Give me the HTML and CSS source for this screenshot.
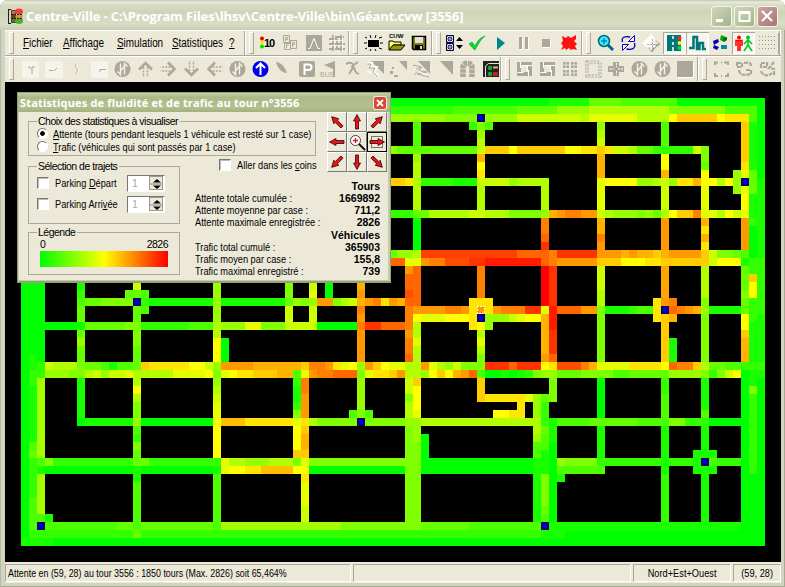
FILE: index.html
```html
<!DOCTYPE html>
<html lang="fr">
<head>
<meta charset="utf-8">
<title>Centre-Ville</title>
<link rel="stylesheet" href="styles.css">
</head>
<body>
<div class="window">
  <header class="titlebar">
    <svg class="logo" width="17" height="17" viewBox="0 0 17 17"><path d="M1.500 1v15M1 1.500h3M1 15.500h3" stroke="#222" fill="none"/><path d="M4 2h5v13H4z" fill="#6b3a28"/><path d="M5 3h3v3H5z" fill="#c0705a"/><path d="M5 11h3v3H5z" fill="#2f8a2a"/><ellipse cx="12" cy="3.500" rx="4" ry="3" fill="#ee4238"/><ellipse cx="12" cy="8.500" rx="3.500" ry="2.200" fill="#c69a3a"/><ellipse cx="12" cy="13" rx="4" ry="3" fill="#4fae25"/><path d="M4 6.500h12M4 10.500h12" stroke="#312" stroke-dasharray="2 1"/></svg>
    <h1 class="caption">Centre-Ville - C:\Program Files\lhsv\Centre-Ville\bin\Géant.cvw [3556]</h1>
    <div class="controls">
      <span class="ctl"><svg width="21" height="21"><path d="M5 14.500h7" stroke="#fff" stroke-width="3"/></svg></span>
      <span class="ctl"><svg width="21" height="21"><path d="M5.500 6h10v9h-10zM5 7h11" stroke="#fff" stroke-width="2" fill="none"/></svg></span>
      <span class="ctl close"><svg width="21" height="21"><path d="M5 5l10 10M15 5L5 15" stroke="#fff" stroke-width="2.200"/></svg></span>
    </div>
  </header>

  <div class="bar">
    <nav class="band menu"><span><u>F</u>ichier</span><span><u>A</u>ffichage</span><span><u>S</u>imulation</span><span><u>S</u>tatistiques</span><span><u>?</u></span></nav>
    <div class="band b2">
      <svg class="i"><circle cx="6" cy="6.500" r="2" fill="#e00"/><circle cx="6" cy="10.500" r="2" fill="#ee0"/><circle cx="6" cy="14.500" r="2" fill="#0d0"/><text class="ten" x="8" y="15">10</text></svg>
      <svg class="i"><path d="M4.500 3.500h6v7h-6zM5.500 11.500h6v6h-6zM11.500 8.500h6v8h-6z" fill="none" stroke="#aca899"/><path d="M6.500 9V5.500h2v2h-2M13.500 15v-4.500h2v2h-2M7.500 16v-3h2" fill="none" stroke="#aca899"/></svg>
      <svg class="i gray"><path d="M4 3h16v16H4z"/><path d="M6 16.500h2L10.500 10 12 6.500 13.500 10l2.500 6.500h2" fill="none" stroke="#fff"/></svg>
      <svg class="i"><path d="M8 3v16M16 3v16M4 7h8M10 5h9M4 12h16M4 17h16M12 7v10" stroke="#aca899" stroke-width="1.800"/><path d="M9.500 4v14M17.500 4v14M5 8.500h14M5 13.500h14" stroke="#fff" stroke-width=".7"/></svg>
    </div>
    <div class="band b3">
      <svg class="i"><path d="M6 8h11v7H6z"/><path d="M8 3l1 3M14 3l-1 3M3 5l2 1M20 5l-3 1M2 11h3M18 11h3M3 17l2-1M20 17l-3-1M8 19l1-2M14 19l-1-2" stroke="#000"/></svg>
      <svg class="i"><text class="cuw" x="4" y="6">CUW</text><path d="M4 18V9h4l1 1h7v3H9z" fill="#ff6" stroke="#000"/><path d="M4 18l4-5h12l-4 5z" fill="#990" stroke="#000"/></svg>
      <svg class="i"><path d="M4.500 4.500h13v13h-12l-1-1z" fill="#7d7b18" stroke="#000" stroke-width="1.500"/><path d="M7 5h8v6H7z" fill="#e4e2d6"/><path d="M7 13h8v5H7z"/><path d="M12 14h2v3h-2z" fill="#ddd"/></svg>
    </div>
    <div class="band b4">
      <svg class="i"><path d="M3.500 3.500h7v7h-7zM3.500 11.500h7v7h-7z" fill="#f4f4ff" stroke="#003"/><path d="M4 4l6 6M10 4l-6 6M4 12l6 6M10 12l-6 6" stroke="#99b"/><circle cx="7" cy="7" r="2" fill="none" stroke="#006"/><circle cx="7" cy="15" r="2" fill="none" stroke="#006"/><path d="M13 9l3.500-4L20 9zM13 13l3.500 4 3.500-4z"/></svg>
      <svg class="i"><path d="M3 12l3-2 3 4c3-6 5-8 10-10-4 3-6 7-10 14-1 0-4-4-6-6z" fill="#0d2" stroke="#083" stroke-width=".5"/></svg>
      <svg class="i"><path d="M8 5l8 6-8 7z" fill="#088"/></svg>
      <svg class="i gray"><path d="M7 5h3v12H7zM13 5h3v12h-3z"/><path d="M10.500 6v11.500H8M16.500 6v11.500H14" stroke="#fff" fill="none"/></svg>
      <svg class="i gray"><path d="M7 7h8v8H7z"/><path d="M15.500 8v7.500H8" stroke="#fff" fill="none"/></svg>
      <svg class="i"><path d="M4 4l4 2 2-2 3 2 5-3v4l-2 2 3 3-2 2 2 4-4-1-2 1-2-2-3 2-1-2-4 2 2-4-2-3 2-2z" fill="#f11"/></svg>
    </div>
    <div class="band b5">
      <svg class="i"><circle cx="10" cy="9" r="5.500" fill="#3ef" stroke="#067" stroke-width="1.500"/><path d="M10 6v6M7 9h6" stroke="#05a"/><path d="M14 13l5 5" stroke="#068" stroke-width="3"/></svg>
      <svg class="i"><path d="M5.500 10C4 5 8 4 13 5M17.500 11c1.500 6-3 7-8 6" fill="none" stroke="#00c" stroke-width="1.300"/><path d="M17.500 3.500v6h-6zM5.500 18.500v-6h6z" fill="#fff" stroke="#00c"/></svg>
      <svg class="i"><path d="M20 12l-4-3v6zM12 20l-3-4h6zM18 13l-5 5" fill="#aca899" stroke="#aca899"/><path d="M11 4v14M4 11h14M11 3l3 4H8zM3 11l4-3v6zM8 8v6h6V8z" stroke="#fff" stroke-width="1.500" fill="none"/><path d="M12.500 7v10M7 12.500h10" stroke="#aca899" stroke-dasharray="2 1"/></svg>
      <svg class="i on"><path d="M4 3h5v3h1V3h3v16h-3v-3H9v3H4z" fill="#077"/><path d="M9 3h9v16H9z" fill="#077"/><path d="M10 4v3M10 10v3M10 15v4" stroke="#fff" stroke-width="1.500"/><circle cx="16.500" cy="6" r="2" fill="#f22"/><circle cx="16.500" cy="11" r="2" fill="#fe0"/><circle cx="16.500" cy="16" r="2" fill="#0d3"/></svg>
      <svg class="i on"><path d="M3 16h4.500V5H11v12h2.500v-6H17v6h3" fill="none" stroke="#077" stroke-width="2.500"/></svg>
      <svg class="i"><path d="M4 9l5-2 1 3-5 3zM5 13l5 2-2 3-4-2z" fill="#00b"/><path d="M12 3l5 2-2 5-4-2z" fill="#0a0"/><path d="M14 6l4-1v3l-3 2z" fill="#063"/><path d="M12 13h6v4h-6z" fill="#08a"/></svg>
      <svg class="i on"><circle cx="7" cy="5.500" r="2" fill="#f00"/><path d="M4 14V8.500h6V14M6 8v11M8 8v11" stroke="#f00" stroke-width="1.600" fill="none"/><circle cx="16" cy="5.500" r="2" fill="#0c2"/><path d="M16 7v6l-4 6M16 13l4 6M12 12l4-4 4 4" stroke="#0c2" stroke-width="1.600" fill="none"/></svg>
      <svg class="i"><path d="M4 4.500h16M4 8.500h16M4 12.500h16M4 16.500h16" stroke="#999585" stroke-dasharray="1 2"/></svg>
      <span class="sep"></span>
    </div>
  </div>

  <div class="bar second">
    <div class="band c1">
      <svg class="i"><path d="M3 3h17v17H3z" fill="#f5f3ea"/><path d="M9 9h2v2M16 9h-3v7" stroke="#aca899" fill="none"/></svg>
      <svg class="i"><path d="M3 3h18v17H3z" fill="#f5f3ea"/><path d="M7 12.500h4M12 13l3-3" stroke="#aca899" fill="none"/></svg>
      <svg class="i"><path d="M11 6v4l2 2-2 4" stroke="#aca899" fill="none"/><path d="M12 6v4l2 2-2 4" stroke="#fff" fill="none"/></svg>
      <svg class="i"><path d="M3 3h17v17H3z" fill="#f5f3ea"/><path d="M12 14v-2.500h6" stroke="#aca899" fill="none"/></svg>
      <svg class="i"><use href="#way"/></svg>
      <svg class="i"><use href="#up"/></svg>
      <svg class="i"><use href="#up" transform="rotate(90 11.500 11)"/></svg>
      <svg class="i"><use href="#up" transform="rotate(180 11.500 11)"/></svg>
      <svg class="i"><use href="#up" transform="rotate(270 11.500 11)"/></svg>
      <svg class="i"><use href="#way"/></svg>
      <svg class="i"><circle cx="11.500" cy="11" r="8" fill="#0000e8"/><path d="M11.500 17V6M7 10l4.500-4.500L16 10" stroke="#fff" stroke-width="2" fill="none"/></svg>
      <svg class="i gray"><path d="M4 4c5 0 9 5 11 11-5 0-9-4-11-11z"/></svg>
      <svg class="i gray"><rect x="4" y="3" width="16" height="16" rx="2"/><path d="M9.500 17V6.500h4c4 0 4 5.500 0 5.500h-4" stroke="#fff" stroke-width="2" fill="none"/></svg>
      <svg class="i gray"><path d="M17 3v16h-2v-8L6 7z"/><text class="bus" x="2" y="19">BUS</text></svg>
      <svg class="i"><path d="M5 6c5-3 8 0 7 3s-3 5-4 7M10 9l7-5M13 9c1 5 2 6 5 7" stroke="#aca899" stroke-width="2" fill="none"/></svg>
      <svg class="i gray"><path d="M7 3h13v13z"/><path d="M3 5h5L6 9h7l-3 5 5 5M4 13l3 2" stroke="#fff" fill="none" stroke-width="2"/><path d="M3 6h4L5 10h6l-2 4 5 5" stroke="#aca899" fill="none"/></svg>
      <svg class="i gray"><path d="M12 3h8v9z"/><path d="M3 13h3v3H3zM7 17h4v2H7zM5 9h2v2H5z"/></svg>
      <svg class="i gray"><path d="M8 3h12v13z"/><path d="M3 7l8 2-6 3 12 2-10 2 12 3M4 17l8-8" stroke="#aca899" fill="none"/><path d="M4 11l12 6" stroke="#fff"/></svg>
      <svg class="i gray"><path d="M7 3h13v14z"/></svg>
      <svg class="i"><path d="M7 19V9c0-5 9-5 9 0v10" stroke="#aca899" stroke-width="5.500" stroke-dasharray="3.500 .7" fill="none"/></svg>
      <svg class="i"><path d="M4 3h16v16H4z" fill="#222"/><path d="M6.500 19V8l3-2.500H20" stroke="#ddd" fill="none"/><circle cx="11" cy="10" r="2.200" fill="#1a3"/><circle cx="11" cy="16" r="2.200" fill="#1a3"/><path d="M14 8.500h5v2h-5z" fill="#db5"/><path d="M14 14h5v4h-5z" fill="#b22"/></svg>
    </div>
    <div class="band c2">
      <svg class="i"><use href="#sq"/></svg>
      <svg class="i"><use href="#sq"/></svg>
      <svg class="i gray"><path d="M4 4h6v6H4zM12 4h6v6h-6zM4 12h6v6H4zM12 12h6v6h-6z"/><path d="M4 7h15M4 15h15M7 4v14M15 4v14" stroke="#eee" stroke-width=".8"/></svg>
      <svg class="i"><path d="M5 4h13v14H5z" fill="none" stroke="#aca899" stroke-width="3" stroke-dasharray="2.500 .8"/><path d="M5 4h13v14H5z" fill="none" stroke="#fff" stroke-width=".8"/></svg>
      <svg class="i gray"><path d="M8 4h6v4h5v6h-5v4H8v-4H3V8h5z"/><path d="M11.500 5v4M11.500 13v4M5 11h4M13 11h5" stroke="#fff" stroke-dasharray="2 1"/></svg>
      <svg class="i"><use href="#way"/></svg>
      <svg class="i"><use href="#way"/></svg>
      <svg class="i gray"><path d="M3 3h16v16H3z"/><path d="M19.500 4v15.500H4" stroke="#fff" fill="none"/></svg>
    </div>
    <div class="band c3">
      <svg class="i"><path d="M5 7V4.500h3M14 4.500h4V7M18 15v3h-3M8 18H5v-3M11 4.500h1M11 18h1" stroke="#aca899" stroke-width="2" fill="none"/></svg>
      <svg class="i"><path d="M4 5h5v4H4zM6 12c0 5 6 6 11 4M11 5c5-1 7 0 7 3M13 12h5v5" stroke="#aca899" stroke-width="2.200" fill="none" stroke-dasharray="4 1"/></svg>
      <svg class="i"><path d="M5 5h6v4H5zM5 13c2 6 8 5 11 2M18 4l-5 6 5 1v7" stroke="#aca899" stroke-width="2.200" fill="none" stroke-dasharray="4 1"/></svg>
    </div>
  </div>

  <main class="view">
    <svg id="map" width="776" height="480" viewBox="0 0 97 60" shape-rendering="crispEdges"></svg>
  </main>

  <footer class="status">
    <div class="cell s1"><span class="t st">Attente en (59, 28) au tour 3556 : 1850 tours (Max. 2826) soit 65,464%</span></div>
    <div class="cell s2"></div>
    <div class="cell s3"><span class="t mid">Nord+Est+Ouest</span></div>
    <div class="cell s4"><span class="t mid">(59, 28)</span></div>
  </footer>
</div>

<section class="dialog">
  <header class="dlg-title"><h2>Statistiques de fluidité et de trafic au tour n°3556</h2><span class="x"><svg width="12" height="12"><path d="M3 3l6 6M9 3L3 9" stroke="#fff" stroke-width="1.800"/></svg></span></header>
  <div class="dlg-body">
    <fieldset class="choice">
      <legend>Choix des statistiques à visualiser</legend>
      <label><i class="radio sel"></i><span class="t"><u>A</u>ttente (tours pendant lesquels 1 véhicule est resté sur 1 case)</span></label>
      <label><i class="radio"></i><span class="t"><u>T</u>rafic (véhicules qui sont passés par 1 case)</span></label>
    </fieldset>
    <div class="pad">
      <b><svg class="a"><use href="#arrow" transform="rotate(-45 9 9)"/></svg></b>
      <b><svg class="a"><use href="#arrow"/></svg></b>
      <b><svg class="a"><use href="#arrow" transform="rotate(45 9 9)"/></svg></b>
      <b><svg class="a"><use href="#arrow" transform="rotate(-90 9 9)"/></svg></b>
      <b><svg class="a"><circle cx="7.500" cy="7.500" r="5" fill="#fff" stroke="#444"/><path d="M7.500 5v5M5 7.500h5" stroke="#e01030" stroke-width="1.300"/><path d="M11 11l6 6" stroke="#111" stroke-width="2"/></svg></b>
      <b class="focus"><svg class="a"><path d="M3.500 3.500h11v11h-11z" fill="none" stroke="#000" stroke-dasharray="1 1"/><use href="#arrow" transform="rotate(90 9 9)"/></svg></b>
      <b><svg class="a"><use href="#arrow" transform="rotate(-135 9 9)"/></svg></b>
      <b><svg class="a"><use href="#arrow" transform="rotate(180 9 9)"/></svg></b>
      <b><svg class="a"><use href="#arrow" transform="rotate(135 9 9)"/></svg></b>
    </div>
    <label class="corners"><i class="check"></i><span class="t">Aller dans les <u>c</u>oins</span></label>
    <div class="stack">
      <fieldset class="trips">
        <legend>Sélection de trajets</legend>
        <label><i class="check"></i><span class="name"><span class="t">Parking <u>D</u>épart</span></span><span class="spin">1<svg width="14" height="14"><path d="M3 5.500L7 2l4 3.500zM3 8.500L7 12l4-3.500z"/><path d="M0 7h14" stroke="#888"/></svg></span></label>
        <label><i class="check"></i><span class="name"><span class="t">Parking Arri<u>v</u>ée</span></span><span class="spin">1<svg width="14" height="14"><path d="M3 5.500L7 2l4 3.500zM3 8.500L7 12l4-3.500z"/><path d="M0 7h14" stroke="#888"/></svg></span></label>
      </fieldset>
      <fieldset class="legend">
        <legend>Légende</legend>
        <div class="ends"><span>0</span><span>2826</span></div>
        <div class="scale"></div>
      </fieldset>
    </div>
    <div class="stats">
      <p><span></span><strong>Tours</strong></p>
      <p><span class="t">Attente totale cumulée :</span><strong>1669892</strong></p>
      <p><span class="t">Attente moyenne par case :</span><strong>711,2</strong></p>
      <p><span class="t">Attente maximale enregistrée :</span><strong>2826</strong></p>
      <p><span></span><strong>Véhicules</strong></p>
      <p><span class="t">Trafic total cumulé :</span><strong>365903</strong></p>
      <p><span class="t">Trafic moyen par case :</span><strong>155,8</strong></p>
      <p><span class="t">Trafic maximal enregistré :</span><strong>739</strong></p>
    </div>
  </div>
</section>

<svg class="defs" width="0" height="0">
  <g id="way"><circle cx="11.500" cy="11" r="8" fill="#aca899"/><path d="M9.500 5.500v11l-3-3M13.500 16.500v-11l3 3M9.500 13l4-5" stroke="#f4f2e8" stroke-width="1.400" fill="none"/></g>
  <g id="up"><path d="M5 11.500l6.500-6.500 6.500 6.500" fill="none" stroke="#aca899" stroke-width="2.500"/><path d="M9.500 9v10M13.500 9v10" stroke="#aca899" stroke-width="1.500" stroke-dasharray="2 1.200"/></g>
  <g id="sq"><path d="M4 4h15v14H4z" fill="#aca899"/><path d="M8 8h7v6H8z" fill="#ece9d8"/><path d="M7.500 4v6M15.500 12v6M4.500 14.500h6M12 7.500h7M8.500 7.500h6v6" stroke="#fff" fill="none"/></g>
  <g id="arrow"><path d="M9 1.500L12.500 8h-2v8h-3V8h-2z" fill="#e8141c" stroke="#300" stroke-width=".8"/></g>
</svg>
<script src="map.js"></script>
</body>
</html>
```
FILE: styles.css
```css
* { box-sizing: border-box; }
body { margin: 0; background: #fff; overflow: hidden; font: 10.5px/12px "Liberation Sans", Arial, sans-serif; color: #000; }
h1, h2, p { margin: 0; }
.t { display: inline-block; white-space: nowrap; transform: scaleX(0.88); transform-origin: left center; }
.t.st { transform: scaleX(0.845); }
.t.mid { transform-origin: center; }
.window { width: 785px; height: 587px; padding: 0 4px 4px 5px; display: flex; flex-direction: column; border-radius: 8px 8px 0 0; background: #d0d4c0; box-shadow: inset 1px 0 #b5baa2, inset -1px -1px #a6aa92; }
.titlebar { height: 30px; flex: none; margin: 0 -4px 0 -5px; padding: 2px 7px 0 7px; display: flex; align-items: center; border-radius: 8px 8px 0 0; background: linear-gradient(#bfc3aa 0, #e8ebdc 2px, #d8dcc6 5px, #cfd4b8 12px, #d9ddc5 24px, #c8cdb4 30px); }
.logo { flex: none; }
.caption { flex: 1; margin-left: 2px; font: bold 13px/18px "Open Sans", sans-serif; letter-spacing: -0.14px; color: #fff; white-space: nowrap; }
.controls { display: flex; gap: 2px; }
.ctl { width: 21px; height: 21px; border: 1px solid #f4f6e8; border-radius: 3px; background: linear-gradient(135deg, #cfd7b9, #a5b38c); }
.ctl svg { display: block; margin: -1px; }
.ctl.close { background: linear-gradient(135deg, #cda5a2, #a77579); }

.bar { display: flex; height: 26px; flex: none; background: #ece9d8; border-top: 1px solid #fff; border-bottom: 1px solid #aca899; }
.bar.second { height: 26px; border-bottom-color: #ece9d8; }
.band { display: flex; align-items: center; flex: none; border-right: 1px solid #aca899; box-shadow: 1px 0 #fff; }
.band::before { content: ""; width: 3px; height: 20px; margin: 0 0 0 4px; border: 1px solid; border-color: #fff #aca899 #aca899 #fff; flex: none; }
.menu { width: 240px; font-size: 12.5px; line-height: 15px; }
.menu span { flex: none; white-space: nowrap; width: 54px; transform: scaleX(0.79); transform-origin: left center; }
.menu span:nth-child(1) { width: 40px; margin-left: 9px; }
.menu span:nth-child(3) { width: 55px; }
.menu span:nth-child(4) { width: 57px; }
.menu span:nth-child(5) { width: 8px; }
.i { width: 23px; height: 22px; flex: none; display: block; }
.i.on { background: #f6f5ef; box-shadow: inset 1px 1px #aca899, inset -1px -1px #fff; }
.gray { fill: #aca899; }
.b2 { width: 104px; } .b2 .i:nth-child(1) { margin-left: 2px; }
.b3 { width: 83px; } .b3 .i:nth-child(1) { margin-left: 4px; }
.b4 { width: 150px; } .b4 .i:nth-child(1) { margin-left: 2px; }
.b5 { width: 198px; } .b5 .i:nth-child(1) { margin-left: 3px; }
.sep { width: 1px; height: 21px; background: #aca899; }
.c1 { width: 496px; } .c1 .i:nth-child(1) { margin-left: 5px; }
.c2 { width: 197px; } .c2 .i:nth-child(1) { margin-left: 3px; }
.c3 { width: 83px; border: 0; box-shadow: none; } .c3 .i:nth-child(1) { margin-left: 3px; }
.ten { font: bold 11px "Liberation Sans", sans-serif; letter-spacing: -1px; }
.cuw { font: bold 6px "Liberation Sans", sans-serif; }
.bus { font: 7px "Liberation Sans", sans-serif; }

.view { height: 480px; flex: none; background: #000; }
.view svg { display: block; }

.status { display: flex; height: 21px; flex: none; background: #ece9d8; padding-top: 2px; gap: 2px; }
.cell { height: 18px; padding: 2px 0 0; border: 1px solid; border-color: #aca899 #fff #fff #aca899; white-space: nowrap; text-align: center; }
.s1 { width: 346px; padding-left: 2px; text-align: left; }
.s2 { width: 278px; }
.s3 { width: 98px; }
.s4 { width: 48px; }

.dialog { position: absolute; left: 17px; top: 92px; width: 374px; height: 191px; padding: 0 3px 3px; background: #ece9d8; border: solid #97a377; border-width: 1px 1px 2px 1px; box-shadow: inset -2px -1px #c6cbae, inset 1px 0 #c6cbae; }
.dlg-title { height: 19px; margin: 0 -3px; padding: 0 4px 0 2px; display: flex; align-items: center; justify-content: space-between; background: linear-gradient(#c9d2a8, #acb987 4px, #b4c08f 14px, #a3b07c); color: #fff; }
.dlg-title h2 { font: bold 11px/18px "Open Sans", sans-serif; letter-spacing: 0.17px; white-space: nowrap; }
.x { width: 12px; height: 12px; background: #d6492f; border-radius: 2px; box-shadow: 0 0 0 1px #f4e8da; }
.x svg { display: block; }
.dlg-body { display: grid; grid-template-columns: 152px 15px 121px 1fr; grid-template-rows: 45px 23px 1fr; height: 168px; padding-left: 7px; }
fieldset { margin: 0; padding: 0; min-width: 0; border: 1px solid #aca899; }
legend { margin-left: 8px; padding: 0 2px 0 1px; height: 12px; letter-spacing: -0.5px; }
label { display: flex; align-items: center; white-space: nowrap; }
.choice { grid-area: 1 / 1 / 2 / 4; margin-top: 3px; height: 41px; }
.choice label { height: 13px; padding-left: 8px; gap: 5px; }
.radio { width: 11px; height: 11px; flex: none; border-radius: 50%; border: 1px solid; border-color: #777 #fff #fff #777; background: #fff; }
.radio.sel { background: radial-gradient(circle, #000 0 2px, #fff 2.6px); }
.check { width: 12px; height: 12px; flex: none; border: 1px solid; border-color: #777 #fff #fff #777; background: #fff; box-shadow: inset 1px 1px #bbb; }
.pad { grid-area: 1 / 4 / 3 / 5; display: grid; grid-template-columns: repeat(3, 20px); grid-auto-rows: 20px; justify-content: end; margin-right: 0; }
.pad b { border: 1px solid; border-color: #fff #777 #777 #fff; }
.pad .focus { border: 1px solid #000; }
.a { display: block; width: 18px; height: 18px; }
.corners { grid-area: 2 / 3 / 3 / 5; align-self: start; margin: 2px 0 0 24px; gap: 6px; height: 12px; width: 96px; }
.stack { grid-area: 2 / 1 / 4 / 2; padding-top: 3px; }
.trips { height: 64px; }
.trips label { height: 20px; padding-left: 8px; }
.trips legend + label { margin-top: 1px; }
.trips label + label { margin-top: 1px; }
.name { width: 78px; padding-left: 6px; }
.spin { width: 38px; height: 17px; display: flex; justify-content: space-between; align-items: center; padding: 0 1px 0 4px; border: 1px solid; border-color: #777 #fff #fff #777; background: #fff; color: #aca899; }
.spin svg { background: #ece9d8; border: 1px solid #999; fill: #000; }
.legend { margin-top: 2px; height: 49px; }
.ends { display: flex; justify-content: space-between; padding: 0 11px; letter-spacing: -0.5px; }
.scale { width: 128px; height: 16px; margin: 1px 0 0 11px; background: linear-gradient(90deg, #0f0, #ff0 50%, #f00); }
.stats { grid-area: 3 / 3 / 4 / 5; padding: 0 7px 0 0; }
.stats p { display: flex; justify-content: space-between; height: 12.150px; white-space: nowrap; }
.stats strong { font: bold 10.5px/12px "Liberation Sans", sans-serif; }
.defs { position: absolute; }
```
FILE: map.js
```js
// Traffic density grid. Levels run from 0 (green) through 10 (yellow) to 20 (red).
const NS = "http://www.w3.org/2000/svg";
const map = document.getElementById("map");

function cell(x, y, w, h, fill) {
  const r = document.createElementNS(NS, "rect");
  r.setAttribute("x", x);
  r.setAttribute("y", y);
  r.setAttribute("width", w);
  r.setAttribute("height", h);
  r.setAttribute("fill", fill);
  map.appendChild(r);
}

function heat(v) {
  const t = v / 10;
  return t <= 1 ? `rgb(${Math.round(255 * t)},255,0)` : `rgb(255,${Math.round(255 * (2 - t))},0)`;
}

// Runs are "level" or "level*length", laid end to end from the start cell.
function run(runs, put) {
  let at = 0;
  for (const part of runs.split(" ")) {
    const [v, n = 1] = part.split("*").map(Number);
    put(at, n, heat(v));
    at += n;
  }
}
const h = (row, col, runs) => run(runs, (a, n, c) => cell(col + a, row, n, 1, c));
const v = (col, row, runs) => run(runs, (a, n, c) => cell(col, row + a, 1, n, c));

// Outer ring
h(2, 48, "0*20 1*5 4*4 3*7 0*11");
h(3, 48, "2*8 3*8 4*5 6*4 7*10 5*7 3*4 0");
h(4, 48, "6*7 5*5 6*4 8*8 7 9*6 7*4 10 12*5 10 11*3 3 0");
v(2, 24, "0*30 1*3 0");
v(3, 24, "0*10 1*2 2*2 1*7 3 4 2*2 2*3 3*4 2 1");
v(4, 24, "0*11 2*2 6.5*10 3 1 6.5*5 3 1 2 1");
v(2, 24, "0*34");
v(92, 5, "12*5 11 9 9 9 10*3 14*4 3 1 4*3 5 4 3 10*2 12 13*3 2 0*20");
v(93, 5, "1*6 4*3 1*3 2 0*4 2*2 12 10*2 2 2*2 1*8 5 2*10 0*8");
v(94, 5, "0*7 1*10 2*7 1*8 0*19");
h(55, 5, "3*9 4*12 3 6.5*15 5*10 4*6 3*9 1*25");
h(56, 5, "2*62 1*3 0*25");
h(57, 2, "1*4 0*89");
h(54, 5, "1");

// Streets running east to west
h(8, 48, "6 4*10 7 12*3 10 12*6 10*2 11*2 12 11 8*2 7 4*2 2*5 8 5");
h(12, 48, "12*2 11 7 2*4 1*3 7 8*3 6 7*4");
h(12, 74, "9 10*4 6*2 7 8 6 11*2 13 10 10 7 10 6");
h(16, 48, "2*3 4*2 7*5 8*2 7*3 5*4 6 13 14 15*2 14*2 8 7 6*3 5 6 4 7 10 12*2 15 10 9 7 10 8 9");
h(21, 48, "4 6*2 7 17.5*12 16*4 15 18*5 14*3 13 14 13*2 12 13 14*4 12 8 5*2 4");
h(22, 48, "16*2 8*2 14 15*2 17*3 18*2 19*7 16 15 14*2 14*3 12*3 10*3 11*3 12*4 12 8 10*3");
h(27, 9, "3 4*2 5*4 3 1*9 5 1*8 4 6 5 6 14*2 5 7 8 13 14 15 11 14 13 16");
h(28, 50, "15 14*4 15*2 14 11 14 11 14 15*3 18*2 10 18 16*3 14*2 5 1*3 2 3*2 11 13 16 15 14 13 6 1*4 4");
h(29, 51, "10 9*3 10*3 11 12 6 6*2 8 9 10*2 13");
h(30, 5, "0*4 1 4*5 5 4 2*6 3*3 7 6*3 9*2 5*3 8*3 9 0*5 15 18*2 16*3 15");
h(35, 5, "8 7*3 4*2 4 3 1 3*2 6 12 11*5 10*2 8 6 14*4 13*6 12 15*2 14 11 9 10 5 14 12 10 9 9 6 7 14 9 7 6 8 5*3 18*3 16 18*3 10*2 17*3 15 13 9 9*3 11*5 16 15*2 12 7 4*2 3*2 2*3");
h(36, 5, "6*3 5*2 7 8 6 8*2 9 7 7*4 9*4 10 5 9 10 11*2 12*3 13*2 3 10 14 15*2 16*3 6 9 11*2 12 14 7*2 6 10 12 10 13 14 16 2 0*2 1 0 1 2 5 6*2 4*3 5*4 3*2 4*3 4 5 6*4 5 2 5 8 10");
h(39, 59, "11*6 9 6 4 5");
h(41, 61, "10*2 11*2");
h(42, 9, "1*8 0*10 12.5*3 11*6 9*2 7 5*11 7*17 2 0 3*4 4*6 3*3 2 5*2 2*3 0*4");
h(47, 5, "5 2*11 4 2*9 9 7*2 6*3 7*3 5 9 5*14 0*14 1*3 6 5*5 2*17");
h(48, 4, "1 0*21 1 9 10*2 11*2 12.5*4 10*2 0*12 5*2 0*17 3*6");

// Streets running north to south
v(9, 24, "1*2 2 3 4*2 1 4 6 4*2 5*2 1*5 0");
v(16, 24, "8*2 4 4 4*2 5*3 4*3 7*2 10 7 5*2 6 3 2 5 4*2 1*2 3*6 4");
v(26, 24, "6*6 7*2 10*3 6 5 6 7 8 9*2 10*5 2 1 3*6 3");
v(27, 32, "0*3");
v(35, 24, "5*3 4 8*3");
v(36, 36, "3 2 1*2 2 5 9 10*3 12");
v(37, 36, "9 15*2 14*3 11 12 13*2 12 9 10 11 9*3 8*2");
v(38, 24, "8*2 9 6 8*3");
v(40, 24, "0*3");
v(44, 24, "13*2 14 13 15 14 15 14*4 6 5 6*4 5");
v(50, 22, "9 14 16*2 17 16 15*3 14 15*2 16 7*2 8*2 5 7*2 6 5*12");
v(51, 5, "3*3 4 6 7*2 7 7*3 4 0*4 7 9 16*5 14 10 7*2 9 7*4 12 10*3 9 6*3 5*10");
v(52, 44, "0*3");
v(59, 5, "5 6 7 8 13 10 11 8 7*3 8");
v(59, 23, "15*4");
v(59, 31, "7 9 7 5*2 3 12*3");
v(64, 40, "11 11");
v(66, 39, "6*3 7*2 6 3*2 1*8");
v(67, 13, "7*3 6 15*2 16 18 16 16 20*5 9 13*5 14 10 6");
v(67, 40, "2*3 4 3*2 1*3 5*4 4 3");
v(68, 23, "18*5 19*3 18*3 16 11 6 5*3");
v(68, 42, "1*3 0*10 1*2");
v(69, 49, "1");
v(74, 5, "6 7 8 12 13*3 9*4 8 13*2 15 14 14 12 8*3 7*2 5*7 9 5 0*5 4 1*4 2 3");
v(82, 5, "3*3 2 10*2 13 8*4 7 14*4 13 12 13.5*5 12 12*6 10 4 2*2 3*4 1*6 2*6");
v(83, 32, "1*3");
v(87, 8, "5*2 4 10*2 9*4 13 11 13 11 12*2 7*4 5 6 5*6 7 5 1*4 3 2 1*12");

// Junction squares around the car parks
h(5, 58, "2 5 3");
v(91, 11, "6*3");
h(26, 15, "4 4 3");
v(17, 27, "2 3");
h(27, 58, "11*3");
h(30, 58, "11 10 6");
h(27, 81, "11 14 15");
h(29, 81, "11 12 13");
h(41, 43, "3 5 3");
h(46, 86, "1*3");
h(47, 86, "1 1 3");
h(48, 86, "1*3");

// Car parks
for (const [x, y] of [[59, 4], [92, 12], [16, 27], [59, 29], [82, 28], [44, 42], [87, 47], [4, 55], [67, 55]]) {
  cell(x, y, 1, 1, "#000078");
  cell(x + 0.25, y + 0.25, 0.5, 0.5, "#0000d8");
}

// Selected cell
const sel = document.createElementNS(NS, "rect");
for (const [k, val] of Object.entries({ x: 59.06, y: 28.06, width: 0.88, height: 0.88, fill: "none", stroke: "#fff", "stroke-width": 0.125, "stroke-dasharray": "0.25 0.125" })) sel.setAttribute(k, val);
map.appendChild(sel);
```
